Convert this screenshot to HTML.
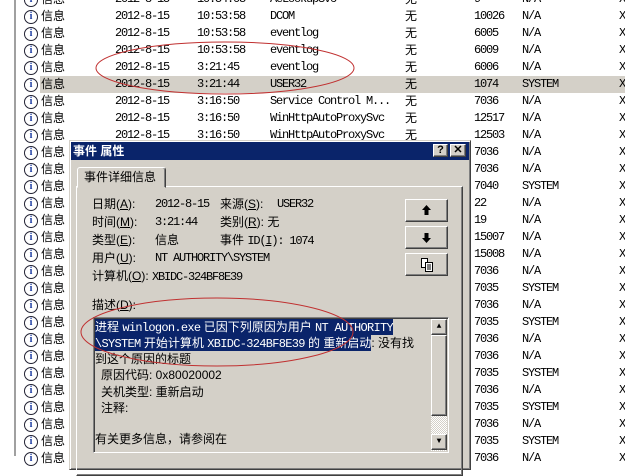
<!DOCTYPE html>
<html><head><meta charset="utf-8"><style>
*{margin:0;padding:0;box-sizing:border-box}
body{width:625px;height:456px;overflow:hidden;background:#fff;position:relative;font-family:"Liberation Mono","Noto Sans CJK SC",monospace;font-size:12px;color:#000}
.a{position:absolute;white-space:nowrap;line-height:14px}
.m{font-family:"Liberation Mono","Noto Sans CJK SC",monospace;letter-spacing:-1.2px}
.d{font-family:"Liberation Mono",monospace;letter-spacing:-0.7px}
.c{font-family:"Liberation Sans","Noto Sans CJK SC",sans-serif}
.hl{background:#0a246a;color:#fff;padding:1px 0}
.ic{position:absolute;width:14px;height:14px;border:1.5px solid #223;border-radius:50%;background:#fff;font:bold 10px/11px "Liberation Serif",serif;text-align:center;color:#1a3aa0}
.btn{position:absolute;background:#d4d0c8;border:1px solid;border-color:#fff #404040 #404040 #fff;box-shadow:inset -1px -1px #808080}
</style></head><body>
<div style="position:absolute;left:14px;top:0;width:2px;height:456px;background:#a0a0a0"></div>
<div style="position:absolute;left:40px;top:76px;width:585px;height:17px;background:#d4d0c8"></div>
<div id="rows"></div>
<script>
var tp=[["10:54:03","AeLookupSvc","9","N/A"],["10:53:58","DCOM","10026","N/A"],["10:53:58","eventlog","6005","N/A"],["10:53:58","eventlog","6009","N/A"],["3:21:45","eventlog","6006","N/A"],["3:21:44","USER32","1074","SYSTEM"],["3:16:50","Service Control M...","7036","N/A"],["3:16:50","WinHttpAutoProxySvc","12517","N/A"],["3:16:50","WinHttpAutoProxySvc","12503","N/A"]];
var rs=[["7036","N/A"],["7036","N/A"],["7040","SYSTEM"],["22","N/A"],["19","N/A"],["15007","N/A"],["15008","N/A"],["7036","N/A"],["7035","SYSTEM"],["7036","N/A"],["7035","SYSTEM"],["7036","N/A"],["7036","N/A"],["7035","SYSTEM"],["7036","N/A"],["7035","SYSTEM"],["7036","N/A"],["7035","SYSTEM"],["7036","N/A"]];
var h="";
for(var i=0;i<28;i++){var y=-8+17*i;
h+='<div class="ic" style="left:24px;top:'+(y+1)+'px">i</div><div class="a c" style="left:41px;top:'+y+'px">信息</div>';
if(i<9){var r=tp[i];
h+='<div class="a m" style="left:115px;top:'+y+'px">2012-8-15</div><div class="a m" style="left:197px;top:'+y+'px">'+r[0]+'</div><div class="a m" style="left:270px;top:'+y+'px">'+r[1]+'</div><div class="a c" style="left:405px;top:'+y+'px">无</div><div class="a m" style="left:474px;top:'+y+'px">'+r[2]+'</div><div class="a m" style="left:522px;top:'+y+'px">'+r[3]+'</div>';}
else{var r=rs[i-9];h+='<div class="a m" style="left:474px;top:'+y+'px">'+r[0]+'</div><div class="a m" style="left:522px;top:'+y+'px">'+r[1]+'</div>';}
h+='<div class="a m" style="left:619px;top:'+y+'px">X</div>';}
document.getElementById("rows").innerHTML=h;
</script>
<div style="position:absolute;left:69px;top:140px;width:402px;height:330px;background:#d4d0c8;border:1px solid;border-color:#d4d0c8 #404040 #404040 #d4d0c8;box-shadow:inset 1px 1px #fff,inset -1px -1px #808080"></div>
<div style="position:absolute;left:71px;top:142px;width:398px;height:18px;background:#0a246a"></div>
<div class="a c" style="left:73px;top:143px;color:#fff;font-weight:bold;font-size:12px;line-height:16px">事件 属性</div>
<div class="btn" style="left:433px;top:144px;width:15px;height:13px;font:bold 11px/11px 'Liberation Sans',sans-serif;text-align:center">?</div>
<div class="btn" style="left:450px;top:144px;width:16px;height:13px;font:bold 11px/11px 'Liberation Sans',sans-serif;text-align:center">✕</div>
<div style="position:absolute;left:76px;top:186px;width:387px;height:290px;border:1px solid;border-color:#fff #404040 #404040 #fff;box-shadow:inset -1px -1px #808080"></div>
<div style="position:absolute;left:77px;top:167px;width:89px;height:21px;background:#d4d0c8;border:1px solid;border-color:#fff #404040 transparent #fff;border-radius:3px 3px 0 0;box-shadow:inset -1px 0 #808080"></div>
<div class="a c" style="left:84px;top:170px">事件详细信息</div>
<div class="a c" style="left:92px;top:197px">日期(<u>A</u>):</div><div class="a m" style="left:155px;top:197px">2012-8-15</div>
<div class="a c" style="left:220px;top:197px">来源(<u>S</u>):</div><div class="a m" style="left:277px;top:197px">USER32</div>
<div class="a c" style="left:92px;top:215px">时间(<u>M</u>):</div><div class="a m" style="left:155px;top:215px">3:21:44</div>
<div class="a c" style="left:220px;top:215px">类别(<u>R</u>): 无</div>
<div class="a c" style="left:92px;top:233px">类型(<u>E</u>):</div><div class="a c" style="left:155px;top:233px">信息</div>
<div class="a c" style="left:220px;top:233px">事件 <span class="m">ID(<u>I</u>): 1074</span></div>
<div class="a c" style="left:92px;top:251px">用户(<u>U</u>):</div><div class="a m" style="left:155px;top:251px">NT AUTHORITY\SYSTEM</div>
<div class="a c" style="left:92px;top:269px">计算机(<u>O</u>): <span class="m">XBIDC-324BF8E39</span></div>
<div class="btn" style="left:405px;top:199px;width:43px;height:23px"><svg width="41" height="21"><path d="M20.5 5 L25 10 H22.5 V15 H18.5 V10 H16 Z" fill="#000"/></svg></div>
<div class="btn" style="left:405px;top:226px;width:43px;height:23px"><svg width="41" height="21"><path d="M20.5 16 L25 11 H22.5 V6 H18.5 V11 H16 Z" fill="#000"/></svg></div>
<div class="btn" style="left:405px;top:253px;width:43px;height:23px"><svg width="41" height="21"><path d="M15.5 4.5h6v9h-6z" fill="#fff" stroke="#000"/><path d="M19.5 8.5h7v9h-7z" fill="#fff" stroke="#000"/><path d="M21 11h4M21 13h4M21 15h4" stroke="#000"/></svg></div>
<div class="a c" style="left:92px;top:298px">描述(<u>D</u>):</div>
<div style="position:absolute;left:93px;top:317px;width:356px;height:136px;border:1px solid;border-color:#808080 #fff #fff #808080;box-shadow:inset 1px 1px #404040"></div>
<div class="a c" style="left:95px;top:320px"><span class="hl">进程 <span class="d">winlogon.exe</span> 已因下列原因为用户 <span class="d">NT AUTHORITY</span></span></div>
<div class="a c" style="left:95px;top:336px"><span class="hl"><span class="d">\SYSTEM</span> 开始计算机 <span class="d">XBIDC-324BF8E39</span> 的 重新启动</span>: 没有找</div>
<div class="a c" style="left:95px;top:352px">到这个原因的标题</div>
<div class="a c" style="left:101px;top:368px">原因代码: 0x80020002</div>
<div class="a c" style="left:101px;top:385px">关机类型: 重新启动</div>
<div class="a c" style="left:101px;top:401px">注释:</div>
<div class="a c" style="left:95px;top:432px">有关更多信息，请参阅在</div>
<div style="position:absolute;left:431px;top:319px;width:16px;height:132px;background:repeating-conic-gradient(#fff 0 25%,#d4d0c8 0 50%) 0 0/2px 2px"></div>
<div class="btn" style="left:431px;top:319px;width:16px;height:16px;font-size:8px;text-align:center;line-height:14px">▲</div>
<div class="btn" style="left:431px;top:335px;width:16px;height:81px"></div>
<div class="btn" style="left:431px;top:434px;width:16px;height:16px;font-size:8px;text-align:center;line-height:14px">▼</div>
<svg style="position:absolute;left:0;top:0" width="625" height="456">
<ellipse cx="225" cy="68" rx="129" ry="26" fill="none" stroke="#c03030" stroke-width="1"/>
<ellipse cx="217" cy="332" rx="136" ry="34" fill="none" stroke="#c03030" stroke-width="1"/>
</svg>
</body></html>
